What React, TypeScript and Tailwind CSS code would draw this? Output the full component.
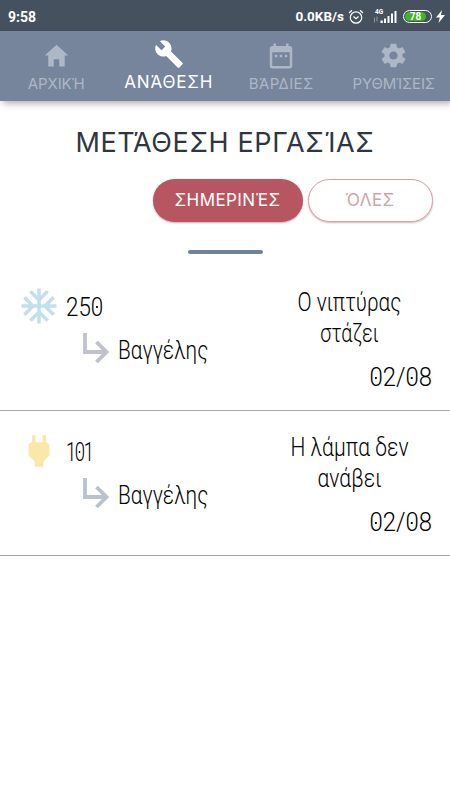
import type { ReactNode } from "react";
import { IoMdHome, IoMdSettings } from "react-icons/io";
import { MdAcUnit, MdBuild, MdDateRange, MdPower } from "react-icons/md";

type Task = {
  room: string;
  assignee: string;
  assigneeColor: string;
  lines: { text: string; style: string }[];
  date: string;
  icon: ReactNode;
  roomStyle: string;
};

const TABS = [
  { label: "ΑΡΧΙΚΉ", icon: <IoMdHome size={29} />, style: "text-[15px] tracking-[-0.1px]" },
  { label: "ΑΝΆΘΕΣΗ", icon: <MdBuild size={30} />, style: "text-[17px] tracking-[0.8px]", active: true },
  { label: "ΒΆΡΔΙΕΣ", icon: <MdDateRange size={30} />, style: "text-[15px] tracking-[0.4px]" },
  { label: "ΡΥΘΜΊΣΕΙΣ", icon: <IoMdSettings size={29} />, style: "text-[15px] tracking-[-0.2px]" },
];

const TASKS: Task[] = [
  {
    room: "250",
    roomStyle: "scale-x-[0.86]",
    assignee: "Βαγγέλης",
    assigneeColor: "text-[#c0c2cd]",
    lines: [
      { text: "Ο νιπτύρας", style: "scale-x-[0.8]" },
      { text: "στάζει", style: "scale-x-[0.76]" },
    ],
    date: "02/08",
    icon: <MdAcUnit size={42} className="text-[#c2dfee]" />,
  },
  {
    room: "101",
    roomStyle: "scale-x-[0.71] tracking-[-2px]",
    assignee: "Βαγγέλης",
    assigneeColor: "text-[#bac2cd]",
    lines: [
      { text: "Η λάμπα δεν", style: "scale-x-[0.81]" },
      { text: "ανάβει", style: "scale-x-[0.81]" },
    ],
    date: "02/08",
    icon: <MdPower size={42} className="text-[#fae8aa]" />,
  },
];

function ArrowIcon({ className }: { className: string }) {
  return (
    <svg className={`h-[42px] w-[42px] ${className}`} viewBox="0 0 42 42" fill="none" stroke="currentColor" strokeWidth="3.8">
      <path d="M9 6V25H29.500M20.500 15L30.500 25L20.500 35" />
    </svg>
  );
}

// Zeros carry a small centre dot
function Digits({ value }: { value: string }) {
  return (
    <>
      {value.split("").map((c, i) =>
        c === "0" ? (
          <span
            key={i}
            className="relative after:absolute after:left-[calc(50%-1px)] after:top-[calc(50%-0.5px)] after:h-0.5 after:w-0.5 after:bg-black after:content-['']"
          >
            0
          </span>
        ) : (
          <span key={i}>{c}</span>
        ),
      )}
    </>
  );
}

function StatusBar() {
  return (
    <div className="flex h-[31px] items-center justify-between bg-[#465160] pl-2 pr-[5px] pt-0.5 font-['Roboto',sans-serif] text-white">
      <span className="text-[14px] font-bold leading-none">9:58</span>
      <div className="flex items-center">
        <span className="text-[13.5px] font-bold leading-none">0.0KB/s</span>
        <svg className="ml-1 h-4 w-4" viewBox="0 0 16 16" fill="none" stroke="white" strokeWidth="1.2">
          <circle cx="8" cy="8.500" r="5.700" />
          <path d="M1 4L4 1.300M15 4L12 1.300M5.500 7.500L8 9.700L10.500 7.500" />
        </svg>
        <svg className="ml-2.5 h-4 w-6" viewBox="0 0 24 16" fill="white">
          <text x="1" y="5" fontSize="6.500" fontWeight="700">4G</text>
          <path d="M0 8.500h1v5H0zM2.500 7.500h1v5h-1z" opacity="0.4" />
          <path d="M6.500 11.500h2.300v2.500H6.500zM10 9.500h2v4.500h-2zM13.500 7h2v7h-2zM17 4.500h2v9.500h-2zM20.500 2h2v12h-2z" />
        </svg>
        <div className="ml-[5px] flex h-[13px] w-[29px] rounded-full border-[1.5px] border-white p-px">
          <div className="flex w-[21px] items-center justify-center rounded-full bg-[#43b51e] text-[10px] font-bold leading-none">78</div>
        </div>
        <svg className="ml-1 h-[13px] w-[9px]" viewBox="0 0 9 13" fill="white">
          <path d="M6 0L0 7.500h3.800L2.500 13L9 5H5z" />
        </svg>
      </div>
    </div>
  );
}

function TabBar() {
  return (
    <nav className="relative grid h-[70px] grid-cols-4 bg-[#76859c] shadow-[3px_2px_7px_rgba(70,50,60,0.45)]">
      {TABS.map((tab) => (
        <div
          key={tab.label}
          className={`flex flex-col items-center ${tab.active ? "pt-[7px] text-white" : "pt-[9px] text-[#adb7c6]"}`}
        >
          <div className="flex h-[31px] items-center">{tab.icon}</div>
          <span className={`whitespace-nowrap ${tab.active ? "leading-[27px]" : "leading-[25px]"} ${tab.style}`}>{tab.label}</span>
        </div>
      ))}
    </nav>
  );
}

function TaskRow({ task }: { task: Task }) {
  return (
    <div className="flex h-[145px] justify-between border-b border-[#a6a6a6] px-[18px] font-['Roboto',sans-serif] text-[26px] font-light text-black">
      <div className="pt-[19px]">
        <div className="flex h-[42px] items-center">
          {task.icon}
          <span className={`ml-1.5 mt-0.5 origin-left ${task.roomStyle}`}>
            <Digits value={task.room} />
          </span>
        </div>
        <div className="flex h-[42px] items-center pl-[58px]">
          <ArrowIcon className={task.assigneeColor} />
          <span className="mt-1 w-[90px] origin-left scale-x-[0.8]">{task.assignee}</span>
        </div>
      </div>
      <div className="w-[165px] pt-[21px]">
        <div className="text-center leading-[31px]">
          {task.lines.map((line) => (
            <div key={line.text} className={`whitespace-nowrap ${line.style}`}>{line.text}</div>
          ))}
        </div>
        <div className="mt-[13px] origin-right scale-x-[0.92] text-right leading-[31px]">
          <Digits value={task.date} />
        </div>
      </div>
    </div>
  );
}

export default function App() {
  return (
    <div className="h-[800px] w-[450px] overflow-hidden bg-white font-['Inter',sans-serif]">
      <StatusBar />
      <TabBar />
      <h1 className="mt-6 text-center text-[27px] leading-9 tracking-[0.6px] text-[#30363f]">ΜΕΤΆΘΕΣΗ ΕΡΓΑΣΊΑΣ</h1>
      <div className="mt-[18px] flex justify-end gap-[5px] pr-[17.5px] text-[17px] tracking-[0.4px]">
        <button className="h-[43px] w-[150px] rounded-full bg-[#b75661] text-white shadow-[0_1px_2px_rgba(120,50,50,0.4)]">
          ΣΗΜΕΡΙΝΈΣ
        </button>
        <button className="h-[43px] w-[125px] rounded-full border border-[#d6a0a7] bg-white text-[#d3a1a7] shadow-[0_1px_2px_rgba(120,50,50,0.35)]">
          ΌΛΕΣ
        </button>
      </div>
      <div className="mx-auto mt-[28px] h-1 w-[75px] rounded-full bg-[#728299]" />
      <div className="mt-[12px]">
        {TASKS.map((task) => (
          <TaskRow key={task.room} task={task} />
        ))}
      </div>
    </div>
  );
}
